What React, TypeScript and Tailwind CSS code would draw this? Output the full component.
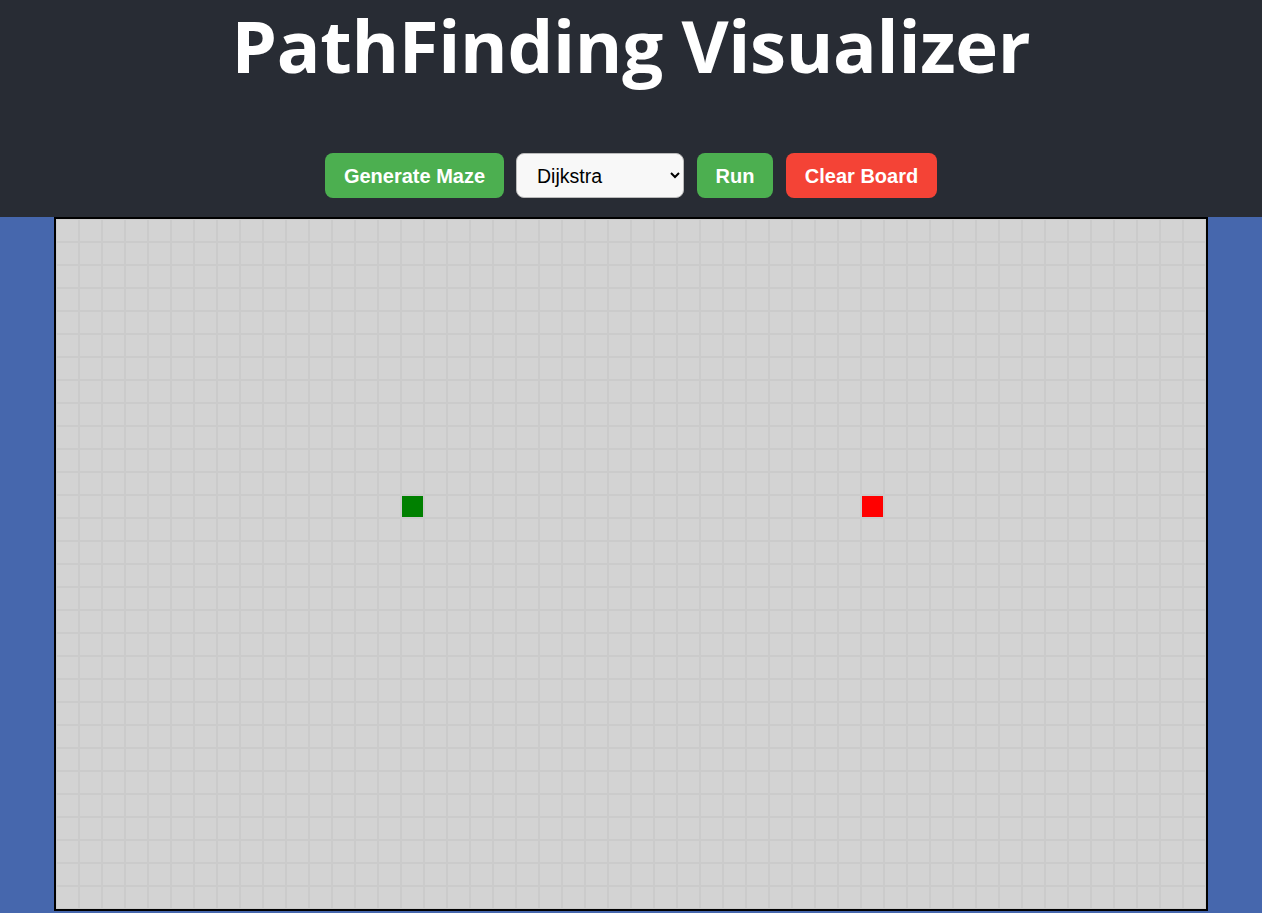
import { useState } from "react";

const ROWS = 30;
const COLS = 50;
const START = { row: 12, col: 15 };
const END = { row: 12, col: 35 };

const btnCls =
  "h-[45px] px-0 whitespace-nowrap rounded-lg text-white text-[20px] font-bold font-['Liberation_Sans',Arial,sans-serif]";

function Cell({ row, col }: { row: number; col: number }) {
  let bg = "bg-[#d3d3d3]";
  if (row === START.row && col === START.col) bg = "bg-[#008000]";
  if (row === END.row && col === END.col) bg = "bg-[#ff0000]";
  return <div className={`w-[23px] h-[23px] border border-[#cbcbcb] ${bg}`} />;
}

export default function App() {
  const [algo, setAlgo] = useState("dijkstra");

  const cells = [];
  for (let r = 0; r < ROWS; r++) {
    for (let c = 0; c < COLS; c++) {
      cells.push(<Cell key={`${r}-${c}`} row={r} col={c} />);
    }
  }

  return (
    <div className="min-h-[913px] bg-[#4667ad]">
      <header className="h-[217px] bg-[#282c34] flex flex-col items-center">
        <h1 className="pt-[2px] text-white font-bold text-[72.5px] leading-[86px] font-['Open_Sans',sans-serif] tracking-[-0.3px] whitespace-nowrap">
          PathFinding Visualizer
        </h1>
        <div className="mt-[65px] flex items-center gap-[12px]">
          <button className={`${btnCls} bg-[#4caf50] w-[179px]`}>Generate Maze</button>
          <select
            value={algo}
            onChange={(e) => setAlgo(e.target.value)}
            className="h-[45px] w-[168px] pl-[16px] pr-[10px] rounded-lg bg-[#f8f8f8] border border-[#bbb] text-black text-[19.5px] font-['Liberation_Sans',Arial,sans-serif]"
          >
            <option value="dijkstra">Dijkstra</option>
            <option value="astar">A*</option>
            <option value="bfs">BFS</option>
            <option value="dfs">DFS</option>
          </select>
          <button className={`${btnCls} bg-[#4caf50] w-[76px] ml-[1px]`}>Run</button>
          <button className={`${btnCls} bg-[#f44336] w-[151px] ml-[1px]`}>Clear Board</button>
        </div>
      </header>

      <div className="mx-auto w-[1154px] border-2 border-black bg-[#d3d3d3]">
        <div className="grid grid-cols-[repeat(50,23px)]">{cells}</div>
      </div>
    </div>
  );
}
